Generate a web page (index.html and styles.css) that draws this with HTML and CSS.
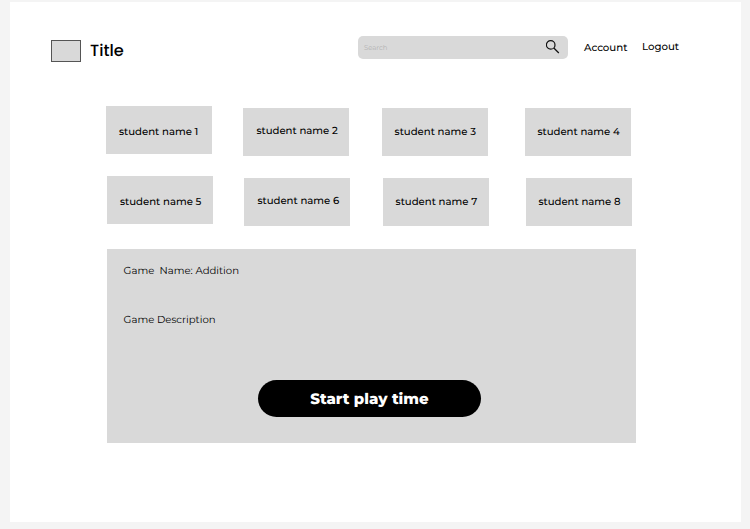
FILE: index.html
```html
<!DOCTYPE html>
<html lang="en">
<head>
<meta charset="utf-8">
<title>Title</title>
<link rel="stylesheet" href="styles.css">
</head>
<body>
<div class="page">
  <header class="header">
    <div class="logo"></div>
    <h1 class="brand">Title</h1>
    <div class="search">
      <span class="search-label">Search</span>
      <svg class="search-icon" width="14" height="14" viewBox="0 0 14 14" fill="none" stroke="#111" stroke-width="1.2"><circle cx="4.7" cy="4.9" r="4.3"/><path d="M7.8 8L12.8 13"/></svg>
    </div>
    <a class="account">Account</a>
    <a class="logout">Logout</a>
  </header>
  <main>
    <section class="students">
      <div class="card first">student name 1</div>
      <div class="card second">student name 2</div>
      <div class="card third">student name 3</div>
      <div class="card fourth">student name 4</div>
    </section>
    <section class="students lower">
      <div class="card first">student name 5</div>
      <div class="card second">student name 6</div>
      <div class="card third">student name 7</div>
      <div class="card fourth">student name 8</div>
    </section>
    <section class="game">
      <p class="game-name">Game&nbsp; Name: Addition</p>
      <p class="game-description">Game Description</p>
      <button class="start">Start play time</button>
    </section>
  </main>
</div>
</body>
</html>
```

FILE: styles.css
```css
* { box-sizing: border-box; }
body {
  margin: 0;
  height: 529px;
  padding: 2px 9px 7px 10px;
  overflow: hidden;
  background: #f4f4f4;
  color: #000;
  font-family: Montserrat, Inter, sans-serif;
  text-rendering: geometricPrecision;
}
.page { height: 520px; background: #fff; }
.header { display: flex; align-items: flex-start; height: 104px; padding: 34px 0 0 41px; }
.logo { width: 30px; height: 22px; margin-top: 4px; border: 1px solid #555; background: #d9d9d9; }
.brand {
  width: 268px;
  margin: 5px 0 0 9px;
  font: 500 16.2px/20px Poppins, Inter, sans-serif;
}
.search {
  display: flex;
  justify-content: space-between;
  width: 210px;
  height: 23px;
  padding: 4px 8px 0 6px;
  border-radius: 5px;
  background: #d9d9d9;
}
.search-label { margin-top: 3px; color: #b3b3b3; font-size: 6.9px; line-height: 10px; }
.account, .logout { font-size: 10.2px; font-weight: 500; line-height: 14px; }
.account { width: 58px; margin: 5px 0 0 16px; }
.logout { margin-top: 4px; }
.students { display: flex; height: 70px; padding-left: 96px; }
.lower { height: 72px; padding-left: 97px; }
.card {
  width: 106px;
  height: 48px;
  padding: 19px 0 0 13px;
  background: #d9d9d9;
  font-size: 10.15px;
  font-weight: 500;
  line-height: 14px;
  white-space: nowrap;
}
.second { margin: 2px 0 0 31.4px; padding-top: 16px; }
.third { margin: 2px 0 0 32.2px; padding-top: 17px; }
.fourth { margin: 2px 0 0 37.8px; padding: 17px 0 0 12px; }
.lower .card { height: 47.5px; }
.game {
  width: 529px;
  height: 194px;
  margin: 1px 0 0 97px;
  padding: 15px 0 0 16.6px;
  background: #d9d9d9;
  font-size: 10.13px;
  line-height: 14px;
}
.game p { margin: 0; }
.game .game-description { margin-top: 35px; }
.start {
  display: block;
  width: 223px;
  height: 37px;
  margin: 53px 0 0 134.4px;
  padding: 0;
  border: 0;
  border-radius: 19px;
  background: #000;
  color: #fff;
  font: 800 15px/37px Montserrat, Inter, sans-serif;
  text-rendering: inherit;
}
```
